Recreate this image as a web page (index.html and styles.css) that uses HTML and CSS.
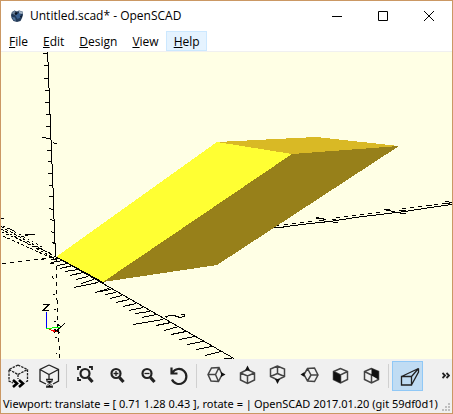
FILE: index.html
```html
<!DOCTYPE html>
<html lang="en">
<head>
<meta charset="utf-8">
<title>Untitled.scad* - OpenSCAD</title>
<link rel="stylesheet" href="styles.css">
</head>
<body>
<div class="window">
  <header class="titlebar">
    <svg class="logo" viewBox="0 0 14 14" aria-hidden="true">
      <path d="M2 3L4.500 1.500L7 2.500L9 1.500L12.500 2.500L13 6L12 9L10.500 12L7 13L3.500 12L1.500 9L1 6Z" fill="#233a58"/>
      <path d="M1.500 4L4.500 1.500L6.500 4L4.500 6Z" fill="#6d8299"/>
      <path d="M5 6L10 3.500L11.500 8L7.500 10Z" fill="#3a608f"/>
      <path d="M8.500 2L12.500 2.500L12.500 5L9.500 4.500Z" fill="#a5b6c8"/>
      <path d="M2 8L5 8.500L6 12L3.500 11Z" fill="#55769b"/>
      <circle cx="6" cy="4.500" r="1.300" fill="#0a1220"/>
      <circle cx="11" cy="7.500" r="1" fill="#101b2c"/>
    </svg>
    <h1 class="title">Untitled.scad* - OpenSCAD</h1>
    <div class="controls">
      <button class="control" aria-label="Minimize"><svg viewBox="0 0 10 10"><path d="M0 5.5H10"/></svg></button>
      <button class="control" aria-label="Maximize"><svg viewBox="0 0 10 10"><path d="M.5 .5H9.5V9.5H.5Z"/></svg></button>
      <button class="control" aria-label="Close"><svg viewBox="0 0 10 10"><path d="M0 0L10 10M10 0L0 10"/></svg></button>
    </div>
  </header>

  <nav class="menubar">
    <button class="menu"><u>F</u>ile</button>
    <button class="menu"><u>E</u>dit</button>
    <button class="menu"><u>D</u>esign</button>
    <button class="menu"><u>V</u>iew</button>
    <button class="menu menu-active"><u>H</u>elp</button>
  </nav>

  <main class="viewport">
    <svg class="scene" viewBox="1 52 451 307" preserveAspectRatio="xMidYMid slice" shape-rendering="crispEdges" role="img" aria-label="3D view">
      <g class="axis">
        <path d="M47.5 52V62M48.5 62V88M49.5 88V114M50.5 114V140M51.5 140V164M52.5 164V188M53.5 188V219M54.5 219V243M55.5 243V257"/>
        <path d="M43 53.5h4M44 65.5h4M44 78.5h4M45 90.5h4M45 102.5h4M46 114.5h4M46 126.5h4M46 138.5h5M42 137.5h4M53 142.5h1M54 143.5h3M47 150.5h4M48 161.5h4M48 173.5h4M49 185.5h4M49 196.5h4M49 208.5h2M51 209.5h2M50 219.5h2M52 220.5h2M51 231.5h1M52 232.5h2M52 242.5h2M53 243.5h2"/>
        <path d="M56.5 257L234 358.5"/>
        <path d="M51 259.5L59 258.5M51 262.5L63 260.5M57 265.5L68 263.5M60 268.5L73 265.5M65 271.5L78 269.5M70 275.5L83 272.5M76 279.5L88 276.5M81 283.5L94 279.5M74 287.5L98 282.5M95 292.5L109 288.5M100 291.5L111 289.5M105 294.5L116 292.5M110 298.5L122 295.5M116 302.5L129 299.5M123 306.5L136 303.5M129 310.5L143 307.5M135 313.5L150 311.5M142 317.5L156 314.5M133 324.5L163 319.5M156 325.5L171 322.5M164 330.5L179 326.5M171 334.5L186 331.5M179 339.5L195 336.5M187 344.5L203 341.5M196 349.5L212 346.5M205 355.5L221 351.5M224 358.5H232"/>
        <path d="M166 317.5L169 315.5H174L177 316.5L180 317.5M181 314.5H184V316.5L180 317.5M165 316.5H167"/>
        <path class="dash" d="M1 226.5L56 257M1 229L52 257M3 236L56 260"/>
        <path class="dash dash-fine" d="M2 232L52 254M10 229L44 248M3 226L14 231"/>
        <path d="M1 218.5H4M35 234.5H25M25 235.500H28M24 236.500H21"/>
        <path class="dash-wide" d="M2 263.5L20 261.5L56 257"/>
        <path class="dash-wide" d="M56.5 258V300M57.5 300V330M58.5 330V346M59.5 346V359"/>
        <path d="M52.5 276v2M53 278.5h1M53 294.5h2M54 309.5h2M54 321.5h2M55 337.5h2M56 353.5h1M50 263.5h4M41 259.5h3"/>
        <path d="M274 227.5H281L286 226.5L310 223.5L330 221.5L355 217.5L380 214.5L405 211.5L430 207.5L452 204.5"/>
        <path d="M276 225.5h3M284 224.5h4M292 223.5h4M300 222.5h4M308 221.5h4M316 218.5h3M319 220.5L338 222.5M316 217.5L326 219.5M332 219.5h4M336 217.5h4M344 216.5h4M352 215.5h4M360 214.5h4M368 213.5h4M376 212.5h4M384 209.5L402 213.5M384 209.5h6M399 210.5h7M400 213.5h6M402 208.5h4M410 207.5h4M418 206.5h4M426 205.5h6M434 204.5h4M442 203.5h8M445 201.5L452 202.5"/>
      </g>
      <path fill="#ffff33" d="M56 257L217 142L292 154L103 282Z"/>
      <path fill="#97801a" d="M292 154L399 146L217 265L103 282Z"/>
      <path fill="#d9b925" d="M217 142L316 137L399 146L292 154Z"/>
      <path class="axis" d="M56.5 257L104 283"/>
      <path class="axis-z" d="M46.5 312V328"/>
      <path class="axis-y" d="M46 328.5H52M52 327.5H60"/>
      <path class="axis-x" d="M49 329.5H51M51 330.5H55M53 331.5H57"/>
      <path class="axis" d="M43 304.5H49L43 310.5H49M58 324.5L61 327L65 323M61 327L54 333M54 329L60 333"/>
    </svg>
  </main>

  <div class="toolbar" role="toolbar">
    <button class="tool" aria-label="Preview"><svg viewBox="0 0 24 24">
      <path class="mid" stroke-dasharray="2.500 1" d="M12 1L3 5.500V17L7 19M12 1L21.500 5.500V17L19 18M3 5.500L12 10.500L21.500 5.500M12 10.500V15"/>
      <path class="heavy" d="M7 16L11 19.500L7 23M13 16L17 19.500L13 23"/></svg></button>
    <button class="tool" aria-label="Render"><svg viewBox="0 0 24 24">
      <path class="mid" d="M12 1L3 5.500V17L9 20M12 1L21.500 5.500V17L16 20M3 5.500L12 10.500L21.500 5.500M12 10.500V15"/>
      <path class="mid" d="M9 15.500H16M9 23H16"/><path class="thin" d="M10 15.500V17.500L12 19.500L10 21.500V23M15 15.500V17.500L13 19.500L15 21.500V23"/><path class="solid" d="M10 17H15L12.500 19.500ZM12.500 20.500L15 23H10Z"/></svg></button>
    <span class="separator"></span>
    <button class="tool" aria-label="View all"><svg viewBox="0 0 24 24">
      <path class="bold" d="M4 6V3H7M15 3H18V6M4 13V16H7"/>
      <circle class="lens" cx="11" cy="9.500" r="4.500"/><path class="handle" d="M14.500 13.500L18.500 18"/></svg></button>
    <button class="tool" aria-label="Zoom in"><svg viewBox="0 0 24 24">
      <circle class="lens" cx="11" cy="9.500" r="4.500"/><path class="mid" d="M8.500 9.500H13.500M11 7V12"/><path class="handle" d="M14.500 13.500L18.500 18"/></svg></button>
    <button class="tool" aria-label="Zoom out"><svg viewBox="0 0 24 24">
      <circle class="lens" cx="11" cy="9.500" r="4.500"/><path class="mid" d="M8.500 9.500H13.500"/><path class="handle" d="M14.500 13.500L18.500 18"/></svg></button>
    <button class="tool" aria-label="Reset view"><svg viewBox="0 0 24 24">
      <path class="lens" d="M5 15.500A7.500 7.500 0 1 0 5.500 8.500M4.500 3.500V9.500H10.500"/></svg></button>
    <span class="separator"></span>
    <button class="tool" aria-label="Right"><svg viewBox="0 0 24 24">
      <path class="gray" d="M4 10.500L7.500 4L15 3.500L18 10.500L14.500 17.500L7 17ZM4 10.500H11.500L15 3.500M11.500 10.500L14.500 17.500"/><path class="solid" d="M17 8L21.500 10.500L17 13Z"/></svg></button>
    <button class="tool" aria-label="Top"><svg viewBox="0 0 24 24">
      <path class="gray" d="M12.500 5.500L5.500 9V16L12.500 19.500L19.500 16V9ZM5.500 9L12.500 12L19.500 9M12.500 12V19.500"/><path class="solid" d="M12.500 1.500L15 6.500H10Z"/></svg></button>
    <button class="tool" aria-label="Bottom"><svg viewBox="0 0 24 24">
      <path class="gray" d="M11.500 2L4.500 5V12.500L11.500 16L18.500 12.500V5ZM11.500 2V9.500L4.500 12.500M11.500 9.500L18.500 12.500"/><path class="solid" d="M11.500 20L14 15H9Z"/></svg></button>
    <button class="tool" aria-label="Left"><svg viewBox="0 0 24 24">
      <path class="gray" d="M7 10.500L10.500 4.500L17.500 4L21 11L17.500 17.500L10.500 17ZM10.500 4.500L14 11H21M14 11L10.500 17"/><path class="solid" d="M7.500 8L3.500 10.500L7.500 13Z"/></svg></button>
    <button class="tool" aria-label="Front"><svg viewBox="0 0 24 24">
      <path class="gray" d="M12.500 4.500L5.500 7.500V15.500L12.500 19L19.500 15.500V7.500ZM5.500 7.500L12.500 11L19.500 7.500M12.500 11V19"/><path class="solid" d="M5.500 7.500L12.500 11V19L5.500 15.500Z"/></svg></button>
    <button class="tool" aria-label="Back"><svg viewBox="0 0 24 24">
      <path class="gray" d="M12.500 4.500L5.500 7.500V15.500L12.500 19L19.500 15.500V7.500ZM5.500 7.500L12.500 11V19M12.500 11L19.500 7.500"/><path class="solid" d="M12.500 4.500L19.500 7.500V15.500L12.500 11.500Z"/></svg></button>
    <span class="separator"></span>
    <button class="tool tool-on" aria-label="Perspective" aria-pressed="true"><svg viewBox="0 0 24 24">
      <path class="mid" d="M5.500 12.500H15.500V21H5.500ZM5.500 12.500L22.500 4.500L15.500 12.500M22.500 4.500V8L15.500 21"/></svg></button>
    <button class="more" aria-label="More tools"><svg viewBox="0 0 8 8"><path class="bold" d="M.5 1L3 3.500L.5 6M4.500 1L7 3.500L4.500 6"/></svg></button>
  </div>

  <footer class="statusbar">
    <span>Viewport: translate = [ 0.71 1.28 0.43 ], rotate = |</span>
    <span>OpenSCAD 2017.01.20 (git 59df0d1)</span>
    <svg class="grip" viewBox="0 0 8 8" aria-hidden="true"><path d="M6 0h2v2H6zM3 3h2v2H3zM6 3h2v2H6zM0 6h2v2H0zM3 6h2v2H3zM6 6h2v2H6z"/></svg>
  </footer>
</div>
</body>
</html>
```
FILE: styles.css
```css
* {
  box-sizing: border-box;
}

body {
  margin: 0;
  color: #000;
  font: 12px/16px "Open Sans", "Noto Sans", sans-serif;
}

button {
  margin: 0;
  padding: 0;
  border: 1px solid transparent;
  background: none;
  color: inherit;
  font: inherit;
}

.window {
  display: flex;
  flex-direction: column;
  height: 100vh;
  border: 1px solid #cb9864;
  background: #f0f0f0;
}

.titlebar {
  display: flex;
  align-items: center;
  height: 30px;
  padding-left: 9px;
  background: #fff;
}

.logo {
  width: 14px;
  height: 14px;
}

.title {
  flex: 1;
  margin: 0 0 0 6px;
  font-size: 12px;
  font-weight: 400;
}

.controls {
  display: flex;
}

.control {
  display: flex;
  align-items: center;
  justify-content: center;
  width: 46px;
  height: 28px;
}

.control svg {
  width: 10px;
  height: 10px;
  fill: none;
  stroke: #000;
}

.menubar {
  display: flex;
  height: 21px;
  border-bottom: 1px solid #f0f0f0;
  background: #fff;
}

.menu {
  padding: 2px 6px 0 7px;
}

.menu u {
  text-underline-offset: 1px;
}

.menu-active {
  border-color: #cce8ff;
  background: #e5f3ff;
}

.viewport {
  flex: 1;
  min-height: 0;
  background: #ffffe5;
}

.scene {
  display: block;
  width: 100%;
  height: 100%;
}

.axis,
.axis-x,
.axis-y,
.axis-z {
  fill: none;
  stroke: #000;
}

.axis-x {
  stroke: #f00;
}

.axis-y {
  stroke: #0f0;
}

.axis-z {
  stroke: #00f;
}

.dash {
  stroke-dasharray: 3 2;
}

.dash-fine {
  stroke-dasharray: 2 3;
}

.dash-wide {
  stroke-dasharray: 4 4;
}

.toolbar {
  display: flex;
  align-items: center;
  height: 34px;
  padding: 0 1px;
}

.tool {
  display: flex;
  align-items: center;
  justify-content: center;
  width: 31px;
  height: 30px;
}

.tool-on {
  border-color: #90c8f6;
  background: #c0dcf3;
}

.tool svg,
.more svg {
  flex: none;
  width: 24px;
  height: 24px;
  fill: none;
  stroke: #222;
}

.more {
  margin-left: auto;
}

.more svg {
  display: block;
  width: 8px;
  height: 8px;
}

.toolbar .mid {
  stroke-width: 1.3;
}

.toolbar .gray {
  stroke: #444;
  stroke-width: 1.5;
}

.toolbar .bold {
  stroke-width: 1.8;
}

.toolbar .lens {
  stroke-width: 2.2;
}

.toolbar .heavy {
  stroke: #000;
  stroke-width: 2.6;
}

.toolbar .handle {
  stroke-width: 3.2;
}

.toolbar .solid {
  fill: #111;
  stroke: none;
}

.separator {
  width: 1px;
  height: 24px;
  margin: 0 3px 0 2px;
  background: #d0d0d0;
}

.statusbar {
  display: flex;
  align-items: center;
  gap: 2px;
  height: 20px;
  padding: 2px 2px 0;
  font: 11px/16px "Noto Sans", sans-serif;
  white-space: nowrap;
}

.grip {
  flex: none;
  align-self: flex-end;
  width: 8px;
  height: 8px;
  margin: 0 0 2px auto;
  fill: #bfbfbf;
}
```
